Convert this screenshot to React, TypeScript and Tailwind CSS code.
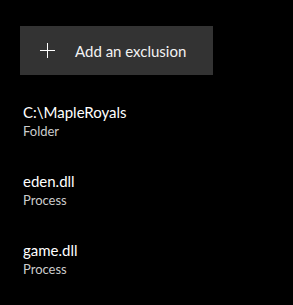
const items = [
  { name: "C:\\MapleRoyals", kind: "Folder" },
  { name: "eden.dll", kind: "Process" },
  { name: "game.dll", kind: "Process" },
];

const App = () => {
  return (
    <div
      className="w-[293px] h-[305px] bg-black text-white pt-[26px] pl-[20px]"
      style={{ fontFamily: 'Lato, "Noto Sans", sans-serif' }}
    >
      <button className="flex items-center w-[193px] h-[49px] bg-[#333333] pl-[20px]">
        <svg width="15" height="15" viewBox="0 0 15 15" className="shrink-0">
          <path d="M7.5 0V15M0 7.5H15" stroke="#ffffff" strokeWidth="1" />
        </svg>
        <span className="ml-[20px] text-[15px] leading-[20px] text-[#f2f2f2]">Add an exclusion</span>
      </button>
      <ul className="mt-[27px] pl-[3px] flex flex-col gap-[31px]">
        {items.map((item) => (
          <li key={item.name} className="flex flex-col">
            <span className="text-[15px] leading-[20px] text-white">{item.name}</span>
            <span className="text-[13px] leading-[18px] text-[#cccccc]">{item.kind}</span>
          </li>
        ))}
      </ul>
    </div>
  );
};

export default App;
